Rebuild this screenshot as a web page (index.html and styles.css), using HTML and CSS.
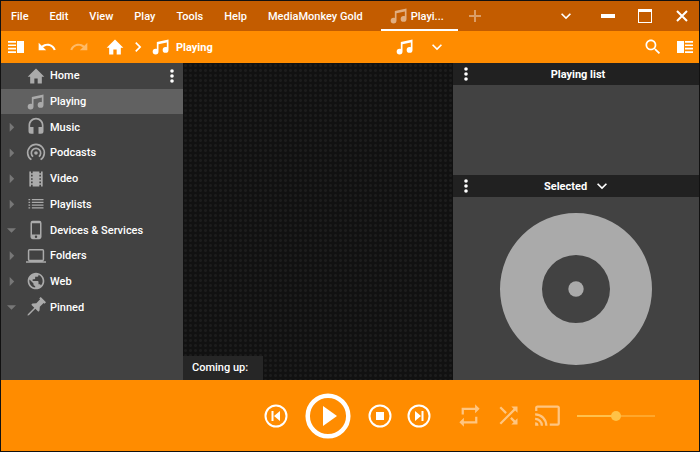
FILE: index.html
```html
<!DOCTYPE html>
<html lang="en">
<head>
    <meta charset="UTF-8">
    <meta name="viewport" content="width=device-width, initial-scale=1.0">
    <title>MediaMonkey</title>
    <link rel="stylesheet" href="styles.css">
</head>
<body>
    <svg class="sprite" aria-hidden="true">
        <symbol id="home" viewBox="0 0 24 24"><path d="M10 21v-6h4v6h5v-8h3L12 3 2 13h3v8z"/></symbol>
        <symbol id="note" viewBox="0 0 24 24"><path d="M21,3V15.5A3.5,3.5 0 0,1 17.5,19A3.5,3.5 0 0,1 14,15.5A3.5,3.5 0 0,1 17.5,12C18.04,12 18.55,12.12 19,12.34V6.47L9,8.6V17.5A3.5,3.5 0 0,1 5.5,21A3.5,3.5 0 0,1 2,17.5A3.5,3.5 0 0,1 5.5,14C6.04,14 6.55,14.12 7,14.34V6L21,3Z"/></symbol>
        <symbol id="headphones" viewBox="0 0 24 24"><path d="M12,1C7,1 3,5 3,10V17A3,3 0 0,0 6,20H9V12H5V10A7,7 0 0,1 12,3A7,7 0 0,1 19,10V12H15V20H18A3,3 0 0,0 21,17V10C21,5 16.97,1 12,1Z"/></symbol>
        <symbol id="podcast" viewBox="0 0 24 24"><circle cx="12" cy="12" r="2.2"/><path class="line" d="M6.5 20A10 10 0 1 1 17.5 20M8.5 16.4A5.6 5.6 0 1 1 15.5 16.4"/></symbol>
        <symbol id="film" viewBox="0 0 24 24"><path d="M18 3v2h-2V3H8v2H6V3H4v18h2v-2h2v2h8v-2h2v2h2V3h-2zM8 17H6v-2h2v2zm0-4H6v-2h2v2zm0-4H6V7h2v2zm10 8h-2v-2h2v2zm0-4h-2v-2h2v2zm0-4h-2V7h2v2z"/></symbol>
        <symbol id="list" viewBox="0 0 24 24"><path d="M3 6h2v1.600H3zM7 6h14v1.600H7zM3 9.300h2v1.600H3zM7 9.300h14v1.600H7zM3 12.600h2v1.600H3zM7 12.600h14v1.600H7zM3 15.900h2v1.600H3zM7 15.900h14v1.600H7z"/></symbol>
        <symbol id="phone" viewBox="0 0 24 24"><path d="M16 1H8a2.6 2.6 0 0 0-2.6 2.6v16.8A2.6 2.6 0 0 0 8 23h8a2.6 2.6 0 0 0 2.6-2.6V3.6A2.6 2.6 0 0 0 16 1zM12 21.6a1.500 1.500 0 1 1 0-3 1.500 1.500 0 0 1 0 3zM16.800 17.500H7.200V4h9.600z"/></symbol>
        <symbol id="laptop" viewBox="0 0 24 24"><path d="M4 5.400h16v11.200H4zM19.800 18.200a2 2 0 0 0 2-2V5.600a2 2 0 0 0-2-2H4.200a2 2 0 0 0-2 2v10.600a2 2 0 0 0 2 2H0V20h24v-1.800z" fill-rule="evenodd"/></symbol>
        <symbol id="globe" viewBox="0 0 24 24"><path d="M12 2C6.480 2 2 6.480 2 12s4.480 10 10 10 10-4.480 10-10S17.520 2 12 2zm-1 17.930c-3.950-.490-7-3.850-7-7.930 0-.620.080-1.210.210-1.790L9 15v1c0 1.100.900 2 2 2v1.930zm6.900-2.540c-.260-.810-1-1.390-1.900-1.390h-1v-3c0-.550-.450-1-1-1H8v-2h2c.550 0 1-.450 1-1V7h2c1.100 0 2-.900 2-2v-.410c2.930 1.190 5 4.060 5 7.410 0 2.080-.800 3.970-2.100 5.390z"/></symbol>
        <symbol id="pin" viewBox="0 0 24 24"><path transform="rotate(45 12 12)" d="M15 8.500V2h1.500V-.5h-9V2H9v6.500L6 12v2h5.100v11l.9 1.500.9-1.500V14H18v-2z"/></symbol>
        <symbol id="undo" viewBox="0 0 24 24"><path d="M12.500,8C9.850,8 7.450,9 5.600,10.600L2,7V16H11L7.380,12.380C8.770,11.220 10.540,10.500 12.500,10.500C16.040,10.500 19.050,12.810 20.100,16L22.470,15.220C21.080,11.030 17.150,8 12.500,8Z"/></symbol>
        <symbol id="redo" viewBox="0 0 24 24"><use href="#undo" transform="translate(24 0) scale(-1 1)"/></symbol>
        <symbol id="down" viewBox="0 0 24 24"><path d="M7.410 8.590L12 13.170l4.590-4.580L18 10l-6 6-6-6z"/></symbol>
        <symbol id="right" viewBox="0 0 24 24"><path d="M8.590 16.590L13.170 12 8.590 7.410 10 6l6 6-6 6z"/></symbol>
        <symbol id="search" viewBox="0 0 24 24"><path d="M15.500 14h-.790l-.280-.270C15.410 12.590 16 11.110 16 9.500 16 5.910 13.090 3 9.500 3S3 5.910 3 9.500 5.910 16 9.500 16c1.610 0 3.090-.590 4.230-1.570l.270.280v.790l5 4.990L20.490 19l-4.990-5zm-6 0C7.010 14 5 11.990 5 9.500S7.010 5 9.500 5 14 7.010 14 9.500 11.990 14 9.500 14z"/></symbol>
        <symbol id="panel-left" viewBox="0 0 16 12"><path d="M0 0h8v1.700H0zM0 3.400h8v1.700H0zM0 6.800h8v1.700H0zM0 10.300h8V12H0zM9 0h7v12H9z"/></symbol>
        <symbol id="panel-right" viewBox="0 0 16 12"><use href="#panel-left" width="16" height="12" transform="translate(16 0) scale(-1 1)"/></symbol>
        <symbol id="dots" viewBox="0 0 4 14"><circle cx="2" cy="2" r="1.800"/><circle cx="2" cy="7" r="1.800"/><circle cx="2" cy="12" r="1.800"/></symbol>
        <symbol id="repeat" viewBox="0 0 24 24"><path d="M17,17H7V14L3,18L7,22V19H19V13H17M7,7H17V10L21,6L17,2V5H5V11H7V7Z"/></symbol>
        <symbol id="shuffle" viewBox="0 0 24 24"><path d="M14.830,13.410L13.420,14.820L16.550,17.950L14.500,20H20V14.500L17.960,16.540L14.830,13.410M14.500,4L16.540,6.040L4,18.590L5.410,20L17.960,7.460L20,9.500V4M10.590,9.170L5.410,4L4,5.410L9.170,10.580L10.590,9.170Z"/></symbol>
        <symbol id="cast" viewBox="0 0 24 24"><path d="M1,10V12A9,9 0 0,1 10,21H12C12,14.920 7.070,10 1,10M1,14V16A5,5 0 0,1 6,21H8A7,7 0 0,0 1,14M1,18V21H4A3,3 0 0,0 1,18M21,3H3C1.890,3 1,3.890 1,5V8H3V5H21V19H14V21H21A2,2 0 0,0 23,19V5C23,3.890 22.100,3 21,3Z"/></symbol>
    </svg>

    <div class="window">
        <header class="titlebar">
            <nav class="menu" aria-label="Main menu">
                <button>File</button>
                <button>Edit</button>
                <button>View</button>
                <button>Play</button>
                <button>Tools</button>
                <button>Help</button>
                <button>MediaMonkey Gold</button>
            </nav>
            <button class="tab"><svg class="icon faded"><use href="#note"/></svg>Playi...</button>
            <button class="new-tab" aria-label="New tab"><svg viewBox="0 0 12 12"><path d="M5 0h2v5h5v2H7v5H5V7H0V5h5z"/></svg></button>
            <div class="window-buttons">
                <button aria-label="Tab list"><svg class="icon"><use href="#down"/></svg></button>
                <button aria-label="Minimize"><svg viewBox="0 0 14 14"><path d="M0 5h14v4H0z"/></svg></button>
                <button aria-label="Maximize"><svg viewBox="0 0 14 14"><path fill-rule="evenodd" d="M0 0h14v14H0zM1 3v10h12V3z"/></svg></button>
                <button aria-label="Close"><svg viewBox="0 0 14 14"><path class="line" d="M2 2l10 10M12 2L2 12"/></svg></button>
            </div>
        </header>

        <div class="toolbar">
            <div class="toolbar-left">
                <button aria-label="Toggle left panel"><svg class="panel-icon"><use href="#panel-left"/></svg></button>
                <button class="undo" aria-label="Undo"><svg class="icon"><use href="#undo"/></svg></button>
                <button class="redo" aria-label="Redo" disabled><svg class="icon"><use href="#redo"/></svg></button>
                <button class="go-home" aria-label="Home"><svg class="icon"><use href="#home"/></svg></button>
                <svg class="icon"><use href="#right"/></svg>
                <a class="crumb" href="#"><svg class="icon"><use href="#note"/></svg>Playing</a>
            </div>
            <div class="toolbar-mid">
                <button aria-label="View mode"><svg class="icon"><use href="#note"/></svg></button>
                <button aria-label="More views"><svg class="icon"><use href="#down"/></svg></button>
            </div>
            <div class="toolbar-right">
                <button aria-label="Search"><svg class="icon"><use href="#search"/></svg></button>
                <button aria-label="Toggle right panel"><svg class="panel-icon"><use href="#panel-right"/></svg></button>
            </div>
        </div>

        <main class="content">
            <aside class="sidebar">
                <ul class="tree">
                    <li><span class="arrow"></span><a href="#"><svg class="icon"><use href="#home"/></svg>Home</a><button class="more" aria-label="Options"><svg class="dots"><use href="#dots"/></svg></button></li>
                    <li class="active"><span class="arrow"></span><a href="#"><svg class="icon"><use href="#note"/></svg>Playing</a></li>
                    <li><span class="arrow closed"></span><a href="#"><svg class="icon"><use href="#headphones"/></svg>Music</a></li>
                    <li><span class="arrow closed"></span><a href="#"><svg class="icon"><use href="#podcast"/></svg>Podcasts</a></li>
                    <li><span class="arrow closed"></span><a href="#"><svg class="icon"><use href="#film"/></svg>Video</a></li>
                    <li><span class="arrow closed"></span><a href="#"><svg class="icon"><use href="#list"/></svg>Playlists</a></li>
                    <li><span class="arrow open"></span><a href="#"><svg class="icon"><use href="#phone"/></svg>Devices &amp; Services</a></li>
                    <li><span class="arrow closed"></span><a href="#"><svg class="icon"><use href="#laptop"/></svg>Folders</a></li>
                    <li><span class="arrow closed"></span><a href="#"><svg class="icon"><use href="#globe"/></svg>Web</a></li>
                    <li><span class="arrow open"></span><a href="#"><svg class="icon"><use href="#pin"/></svg>Pinned</a></li>
                </ul>
            </aside>

            <section class="stage">
                <div class="coming-up">Coming up:</div>
            </section>

            <aside class="side-panels">
                <section class="playing-list">
                    <div class="panel-head">
                        <button aria-label="Playing list options"><svg class="dots"><use href="#dots"/></svg></button>
                        <h2>Playing list</h2>
                    </div>
                </section>
                <section class="selected">
                    <div class="panel-head">
                        <button aria-label="Selected options"><svg class="dots"><use href="#dots"/></svg></button>
                        <h2>Selected <svg class="icon"><use href="#down"/></svg></h2>
                    </div>
                    <div class="artwork">
                        <svg class="disc" viewBox="0 0 152 152"><path fill-rule="evenodd" d="M76 0a76 76 0 1 0 0 152a76 76 0 1 0 0-152zM76 42a34 34 0 1 1 0 68a34 34 0 1 1 0-68z"/><circle cx="76" cy="76" r="7.700"/></svg>
                    </div>
                </section>
            </aside>
        </main>

        <footer class="player">
            <div class="transport">
                <button aria-label="Previous"><svg viewBox="0 0 24 24"><circle class="line" cx="12" cy="12" r="10.500"/><path d="M7.500 7h2v10h-2zM16 7v10l-6-5z"/></svg></button>
                <button class="play" aria-label="Play"><svg viewBox="0 0 46 46"><circle class="ring" cx="23" cy="23" r="20.300"/><path d="M18 13v20l14-10z"/></svg></button>
                <button aria-label="Stop"><svg viewBox="0 0 24 24"><circle class="line" cx="12" cy="12" r="10.500"/><path d="M8 8h8v8H8z"/></svg></button>
                <button aria-label="Next"><svg viewBox="0 0 24 24"><circle class="line" cx="12" cy="12" r="10.500"/><path d="M14.500 7h2v10h-2zM8 7v10l6-5z"/></svg></button>
            </div>
            <div class="extras">
                <button aria-label="Repeat"><svg><use href="#repeat"/></svg></button>
                <button aria-label="Shuffle"><svg><use href="#shuffle"/></svg></button>
                <button aria-label="Cast"><svg><use href="#cast"/></svg></button>
                <input class="volume" type="range" min="0" max="100" value="50" aria-label="Volume">
            </div>
        </footer>
    </div>
</body>
</html>
```

FILE: styles.css
```css
* {
    box-sizing: border-box;
}
body {
    margin: 0;
    font-family: Roboto, sans-serif;
    font-size: 11px;
    font-weight: 500;
    color: #fff;
    background-color: #111;
}
button {
    display: flex;
    align-items: center;
    padding: 0;
    border: none;
    background: none;
    color: inherit;
    font: inherit;
    cursor: pointer;
}
a {
    color: inherit;
    text-decoration: none;
}
svg {
    display: block;
    fill: currentColor;
}
.sprite {
    display: none;
}
.line {
    fill: none;
    stroke: currentColor;
    stroke-width: 2;
}
.icon {
    width: 20px;
    height: 20px;
    flex: none;
}
.dots {
    width: 4px;
    height: 14px;
}
.faded {
    opacity: 0.5;
}
.window {
    display: flex;
    flex-direction: column;
    height: 100vh;
    border: 1px solid #111;
}

/* title bar */
.titlebar {
    display: flex;
    height: 30px;
    background-color: #c35c00;
}
.menu {
    display: flex;
    gap: 21px;
    padding-left: 10px;
}
.tab {
    gap: 2px;
    width: 77px;
    margin-left: 18px;
    padding: 2px 0 0 8px;
    border-bottom: 2px solid #fff;
}
.new-tab {
    margin-left: 11px;
    opacity: 0.4;
}
.new-tab svg {
    width: 12px;
}
.window-buttons {
    display: flex;
    gap: 23px;
    margin-left: auto;
    padding-right: 10px;
}
.window-buttons svg:not(.icon) {
    width: 14px;
}
.window-buttons .icon {
    margin-right: 2px;
}

/* toolbar */
.toolbar {
    display: flex;
    height: 32px;
    padding: 0 6px 0 7px;
    background-color: #ff8c00;
}
.toolbar-left, .toolbar-mid, .toolbar-right {
    display: flex;
    align-items: center;
}
.toolbar-left {
    flex: 11;
}
.toolbar-mid {
    gap: 12px;
}
.toolbar-right {
    flex: 7;
    justify-content: flex-end;
    gap: 14px;
}
.panel-icon {
    width: 16px;
    height: 12px;
}
.undo {
    margin-left: 13px;
}
.redo {
    margin-left: 12px;
    color: #fff;
    opacity: 0.4;
}
.go-home {
    margin: 0 3px 0 16px;
}
.toolbar-left > .icon {
    margin-right: 3px;
}
.crumb {
    display: flex;
    align-items: center;
    gap: 5px;
    font-weight: 700;
}

/* content */
.content {
    display: grid;
    grid-template-columns: 182px 1fr 246px;
    flex: 1;
    min-height: 0;
}
.sidebar {
    background-color: #424242;
}
.tree {
    display: grid;
    grid-auto-rows: 1fr;
    height: 257px;
    margin: 0;
    padding: 0;
    list-style: none;
}
.tree li {
    display: flex;
    align-items: center;
    padding: 0 9px 0 6px;
}
.tree .active {
    background-color: #616161;
}
.tree a {
    display: flex;
    align-items: center;
    gap: 4px;
    margin-left: 10px;
}
.tree .icon {
    color: #aaa;
}
.arrow {
    width: 9px;
    height: 9px;
}
.arrow.closed, .arrow.open {
    background-color: #777;
    clip-path: polygon(30% 0, 80% 50%, 30% 100%);
}
.arrow.open {
    clip-path: polygon(0 30%, 100% 30%, 50% 80%);
}
.more {
    margin-left: auto;
}
.stage {
    display: flex;
    align-items: flex-end;
    background-color: #111;
    background-image: radial-gradient(circle, #1c1c1c 1px, transparent 2px);
    background-size: 5px 5px;
}
.coming-up {
    width: 80px;
    padding: 0 9px;
    line-height: 24px;
    background-color: #262626;
}
.side-panels {
    display: flex;
    flex-direction: column;
    background-color: #424242;
}
.playing-list {
    height: 112px;
}
.panel-head {
    display: flex;
    align-items: center;
    height: 22px;
    padding: 0 11px;
    background-color: #212121;
}
.panel-head h2 {
    display: flex;
    align-items: center;
    justify-content: center;
    gap: 5px;
    flex: 1;
    margin: 0;
    font-size: 11px;
    font-weight: 700;
}
.selected {
    display: flex;
    flex-direction: column;
    flex: 1;
}
.artwork {
    display: flex;
    align-items: center;
    justify-content: center;
    flex: 1;
}
.disc {
    width: 152px;
    color: #aaa;
}

/* player */
.player {
    display: grid;
    grid-template-columns: 1fr auto 1fr;
    align-items: center;
    height: 71px;
    padding-right: 5px;
    background-color: #ff8c00;
}
.transport {
    display: flex;
    align-items: center;
    grid-column: 2;
    gap: 15px;
}
.transport svg {
    width: 24px;
}
.transport .play {
    margin: 0 2px;
}
.play svg {
    width: 46px;
}
.ring {
    fill: none;
    stroke: currentColor;
    stroke-width: 4.5;
}
.extras {
    display: flex;
    align-items: center;
    gap: 12px;
    padding-left: 25px;
}
.extras svg {
    width: 27px;
    height: 27px;
    opacity: 0.5;
}
.volume {
    appearance: none;
    width: 78px;
    height: 12px;
    margin: 0 0 0 4px;
    background: linear-gradient(90deg, #ffc14d 50%, #ffa72b 50%) center / 100% 2px no-repeat;
}
.volume::-webkit-slider-thumb {
    appearance: none;
    width: 10px;
    height: 10px;
    border-radius: 50%;
    background-color: #ffc247;
}
```
